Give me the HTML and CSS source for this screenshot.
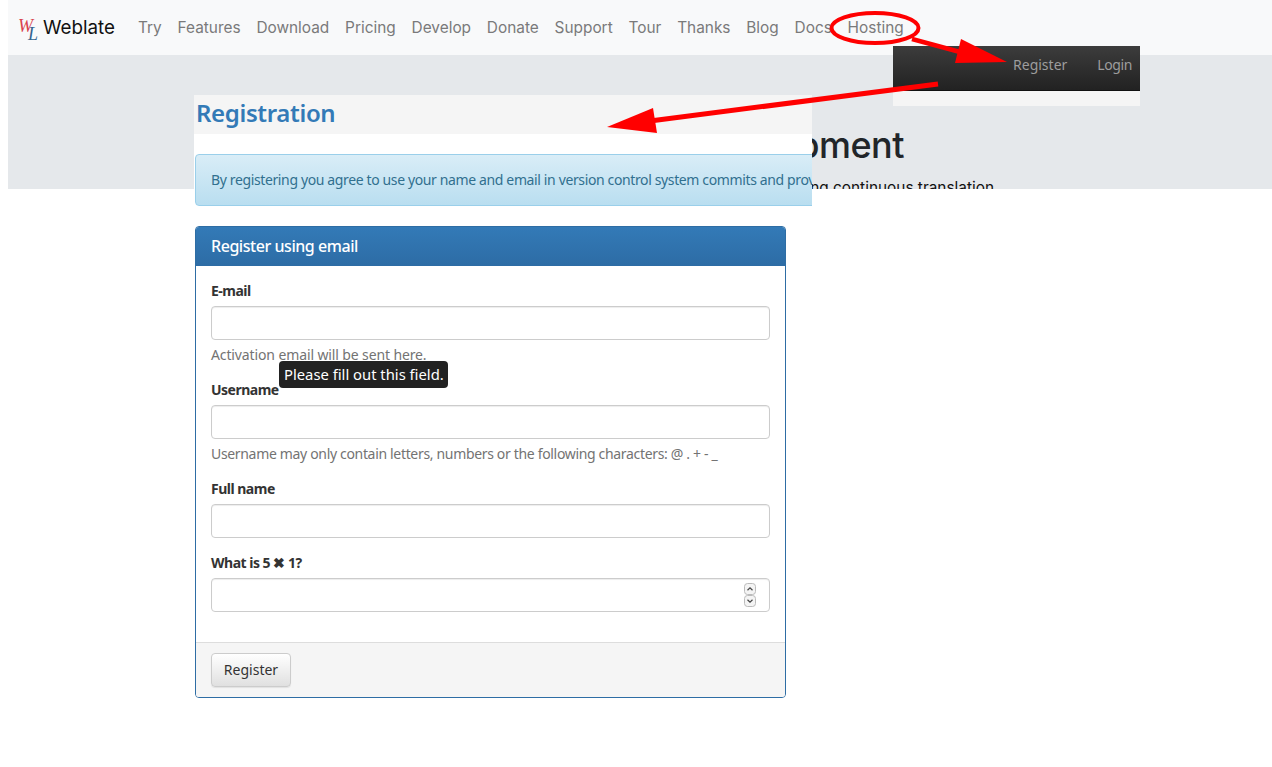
FILE: index.html
```html
<!DOCTYPE html>
<html lang="en">
<head>
<meta charset="utf-8">
<title>Registration - Weblate</title>
<link rel="stylesheet" href="styles.css">
</head>
<body>
<header class="hero">
  <nav class="site-nav">
    <a class="brand" href="#"><span class="brand-mark"><span class="mark-w">W</span><span class="mark-l">L</span></span><span class="brand-name">Weblate</span></a>
    <ul class="site-links">
      <li>Try</li><li>Features</li><li>Download</li><li>Pricing</li><li>Develop</li><li>Donate</li><li>Support</li><li>Tour</li><li>Thanks</li><li>Blog</li><li>Docs</li><li>Hosting</li>
    </ul>
  </nav>
  <div class="hero-copy">
    <h1>Web-based development</h1>
    <p>Web-based localization using continuous translation</p>
  </div>
</header>

<div class="app-bar">
  <div class="app-bar-dark"><a href="#">Register</a><a href="#" class="login">Login</a></div>
</div>

<div class="sheet">
  <h2 class="sheet-title">Registration</h2>
  <div class="alert">By registering you agree to use your name and email in version control system commits and provide the content you contribute under the license.</div>
</div>

<main class="content">
  <form class="card">
    <div class="card-head">Register using email</div>
    <div class="card-body">
      <div class="field">
        <label>E-mail</label>
        <div class="input"></div>
        <p class="help help-short">Activation email will be sent here.</p>
        <div class="tooltip">Please fill out this field.</div>
      </div>
      <div class="field">
        <label>Username</label>
        <div class="input"></div>
        <p class="help">Username may only contain letters, numbers or the following characters: @ . + - _</p>
      </div>
      <div class="field">
        <label>Full name</label>
        <div class="input"></div>
      </div>
      <div class="field last">
        <label>What is 5 ✖ 1?</label>
        <div class="input">
          <div class="spin">
            <svg viewBox="0 0 12 12" width="12" height="12"><rect x=".5" y=".5" width="11" height="11" rx="3" fill="#f4f4f4" stroke="#bbb"/><path d="M3.5 7.2 6 4.8l2.5 2.4" fill="none" stroke="#444" stroke-width="1.2"/></svg>
            <svg viewBox="0 0 12 12" width="12" height="12"><rect x=".5" y=".5" width="11" height="11" rx="3" fill="#f4f4f4" stroke="#bbb"/><path d="M3.5 4.8 6 7.2l2.5-2.4" fill="none" stroke="#444" stroke-width="1.2"/></svg>
          </div>
        </div>
      </div>
    </div>
    <div class="card-foot"><button type="button" class="btn">Register</button></div>
  </form>
</main>

<svg class="marks" width="1272" height="767" viewBox="0 0 1272 767" aria-hidden="true">
  <ellipse cx="875" cy="28" rx="43.5" ry="15" fill="none" stroke="#f00" stroke-width="4"/>
  <path d="M912 39 960 52" stroke="#f00" stroke-width="4.5"/>
  <path d="M1007 62 961 39 955 63Z" fill="#f00"/>
  <path d="M938 84 650 121" stroke="#f00" stroke-width="5"/>
  <path d="M607 127 653 108 657 133Z" fill="#f00"/>
</svg>
</body>
</html>
```
FILE: styles.css
```css
* { box-sizing: border-box; }
html, body { margin: 0; padding: 0; }
body {
  position: relative;
  height: 767px;
  overflow: hidden;
  background: #fff;
  color: #333;
  font: 14px/20px "Noto Sans", "Open Sans", sans-serif;
}

/* Underlying marketing page */
.hero {
  margin-left: 8px;
  height: 189px;
  overflow: hidden;
  background: #e5e8eb;
  font-family: Inter, "Liberation Sans", sans-serif;
}
.site-nav {
  display: flex;
  align-items: center;
  height: 55px;
  padding-left: 10px;
  background: #f8f9fa;
}
.brand {
  display: flex;
  align-items: center;
  color: #111;
  text-decoration: none;
}
.brand-mark {
  display: block;
  position: relative;
  width: 25px;
  height: 26px;
  font-family: "Liberation Serif", serif;
  font-style: italic;
}
.mark-w { position: absolute; left: 0; top: 1px; color: #d9434e; font-size: 18px; line-height: 20px; }
.mark-l { position: absolute; left: 10px; top: 9px; color: #33648f; font-size: 18px; line-height: 20px; }
.brand-name { font-size: 18.8px; line-height: 26px; }
.site-links {
  display: flex;
  gap: 15.8px;
  margin: 1px 0 0 23px;
  padding: 0;
  list-style: none;
  font-size: 15.4px;
  color: #7a7a7a;
}
.hero-copy {
  width: 986px;
  padding: 71px 0 0;
  text-align: right;
  color: #212529;
}
.hero-copy h1 {
  margin: 0;
  padding-right: 90px;
  font-size: 36px;
  line-height: 38px;
  font-weight: 500;
  letter-spacing: -.5px;
}
.hero-copy p {
  margin: 12px 0 0;
  font-size: 15.4px;
  line-height: 24px;
  color: #111;
}

/* Pasted application screenshot pieces */
.app-bar {
  position: absolute;
  left: 893px;
  top: 46px;
  width: 247px;
  height: 60px;
  background: #f5f5f5;
}
.app-bar-dark {
  display: flex;
  justify-content: flex-end;
  gap: 30px;
  height: 45px;
  padding: 9px 8px 0 0;
  background: linear-gradient(#3c3c3c, #222);
  font-size: 14px;
  border-bottom: 1px solid #111;
}
.app-bar-dark a { color: #9d9d9d; text-decoration: none; }
.app-bar-dark .login { letter-spacing: -.4px; }

.sheet {
  position: absolute;
  left: 194px;
  top: 95px;
  width: 618px;
  height: 111px;
  overflow: hidden;
  background: #fff;
}
.sheet-title {
  margin: 0;
  height: 39px;
  padding-left: 2px;
  background: #f5f5f5;
  color: #337ab7;
  font-size: 24px;
  line-height: 35px;
  font-weight: 600;
  letter-spacing: -.35px;
}
.alert {
  margin: 20px 0 0 1px;
  width: 1000px;
  height: 52px;
  padding: 15px;
  border: 1px solid #9acfea;
  border-radius: 4px;
  background: linear-gradient(#d9edf7, #b9def0);
  color: #31708f;
  white-space: nowrap;
  letter-spacing: -.37px;
}

/* Registration form */
.content { padding: 37px 0 0 195px; }
.card {
  width: 591px;
  height: 472px;
  display: flex;
  flex-direction: column;
  border: 1px solid #2e6da4;
  border-radius: 4px;
  overflow: hidden;
}
.card-head {
  height: 39px;
  padding: 9px 15px;
  background: linear-gradient(#337ab7, #2d6ca5);
  color: #fff;
  font-size: 16px;
  font-weight: 500;
  letter-spacing: -.45px;
}
.card-body { flex: 1; padding: 15px 15px 0; }
.field { position: relative; margin-bottom: 15px; }
.field label {
  display: block;
  margin-bottom: 5px;
  color: #333;
  font-weight: 700;
  letter-spacing: -.5px;
}
.input {
  position: relative;
  height: 34px;
  border: 1px solid #ccc;
  border-radius: 4px;
  background: #fff;
  box-shadow: inset 0 1px 1px rgba(0, 0, 0, .075);
}
.help { margin: 5px 0 10px; color: #737373; letter-spacing: -.33px; }
.help-short { letter-spacing: -.12px; }
.spin {
  position: absolute;
  right: 13px;
  top: 4px;
  display: flex;
  flex-direction: column;
}
.tooltip {
  position: absolute;
  left: 68px;
  top: 80px;
  width: 169px;
  height: 27px;
  padding: 3px 5px;
  border-radius: 4px;
  background: #222;
  color: #fff;
  font-size: 14.8px;
  white-space: nowrap;
}
.card-foot {
  height: 55px;
  padding: 10px 15px;
  border-top: 1px solid #ddd;
  background: #f5f5f5;
}
.btn {
  display: block;
  width: 80px;
  height: 34px;
  padding: 0;
  border: 1px solid #ccc;
  border-radius: 4px;
  background: linear-gradient(#fff, #e0e0e0);
  color: #333;
  font: inherit;
  box-shadow: 0 1px 1px rgba(0, 0, 0, .08);
}

/* Red annotations drawn over the screenshot */
.marks {
  position: absolute;
  left: 0;
  top: 0;
  pointer-events: none;
}
```
